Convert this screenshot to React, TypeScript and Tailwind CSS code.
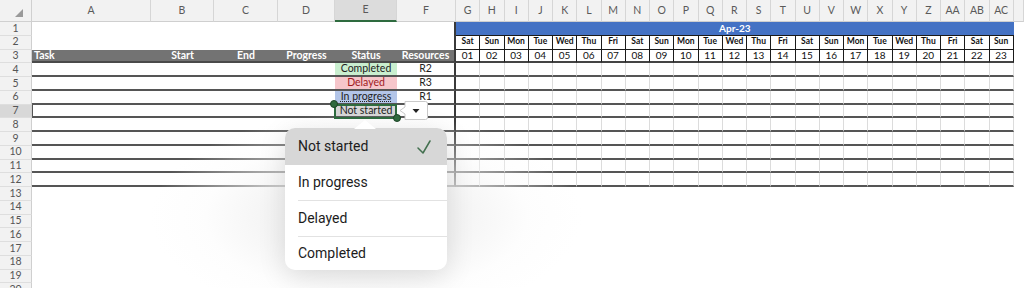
import React from 'react';

const COLS = ['A','B','C','D','E','F','G','H','I','J','K','L','M','N','O','P','Q','R','S','T','U','V','W','X','Y','Z','AA','AB','AC',''];
const DAYS = ['Sat','Sun','Mon','Tue','Wed','Thu','Fri'];
const HEAD3 = ['Task','Start','End','Progress','Status','Resources'];

function cellFor(r: number, c: number): React.ReactNode {
  const key = `${r}-${c}`;
  if (r === 0) {
    if (c === 0) {
      return (
        <div key={key} className="relative bg-[#f2f2f2] border-r border-b border-[#d0d0d0]">
          <svg className="absolute left-[15px] top-[9px]" width="8" height="8" viewBox="0 0 8 8">
            <polygon points="8,0 8,8 0,8" fill="#9a9a9a" />
          </svg>
        </div>
      );
    }
    const sel = c === 5;
    return (
      <div
        key={key}
        className={`flex items-center justify-center border-r border-[#d6d6d6] text-[10.5px] text-[#5a5a5a] ${sel ? 'bg-[#dcdcdc] border-b-2 border-b-[#2e6b3f]' : 'bg-[#f2f2f2] border-b border-b-[#cfcfcf]'}`}
      >
        {COLS[c - 1]}
      </div>
    );
  }
  if (c === 0) {
    return (
      <div
        key={key}
        className={`flex items-center justify-center border-r border-r-[#cfcfcf] border-b border-b-[#dedede] text-[10.5px] text-[#555] ${r === 7 ? 'bg-[#d8d8d8]' : 'bg-[#f2f2f2]'}`}
      >
        {r}
      </div>
    );
  }
  const inTable = r >= 4 && r <= 12;
  if (c >= 1 && c <= 6) {
    const rightF = c === 6 && r <= 12 ? 'border-r-2 border-r-[#3a3a3a]' : '';
    if (r === 3) {
      return (
        <div
          key={key}
          className={`flex items-center bg-[#737373] border-b-2 border-b-[#4a4a4a] font-bold text-white text-[10.5px] ${c === 1 ? 'justify-start pl-[2px]' : 'justify-center'} ${rightF}`}
        >
          {HEAD3[c - 1]}
        </div>
      );
    }
    if (inTable) {
      let content: React.ReactNode = null;
      let extra = '';
      if (c === 5) {
        if (r === 4) { extra = 'bg-[#c9eecf] text-[#1f6b2c]'; content = 'Completed'; }
        if (r === 5) { extra = 'bg-[#f6c6cb] text-[#a01a24]'; content = 'Delayed'; }
        if (r === 6) { extra = 'bg-[#b3c5e8] text-[#4a72c6]'; content = <span className="underline decoration-dotted">In progress</span>; }
        if (r === 7) { extra = 'bg-[#d6d6d6] text-[#7f7f7f]'; content = 'Not started'; }
      }
      if (c === 6) {
        if (r === 4) content = 'R2';
        if (r === 5) content = 'R3';
        if (r === 6) content = 'R1';
      }
      const leftA = c === 1 && r === 7 ? 'border-l border-l-[#555]' : '';
      return (
        <div
          key={key}
          className={`flex items-center justify-center border-b-2 border-b-[#555] text-[10.5px] text-[#222] ${extra} ${rightF} ${leftA}`}
        >
          {content}
        </div>
      );
    }
    return <div key={key} className={rightF} />;
  }
  if (c >= 7 && c <= 29) {
    const d = c - 7;
    if (r === 1) {
      if (c !== 7) return null;
      return (
        <div
          key={key}
          className="col-span-23 flex items-center justify-center bg-[#4472c4] border-b border-b-[#1a1a1a] text-white font-bold text-[10px]"
        >
          Apr-23
        </div>
      );
    }
    if (r === 2) {
      return (
        <div key={key} className="flex items-end justify-center pb-[1px] border-r border-b border-[#1a1a1a] font-bold text-[8.5px] text-[#111]">
          {DAYS[d % 7]}
        </div>
      );
    }
    if (r === 3) {
      return (
        <div key={key} className="flex items-center justify-center border-r border-r-[#1a1a1a] border-b-2 border-b-[#444] text-[10px] text-[#111]">
          {String(d + 1).padStart(2, '0')}
        </div>
      );
    }
    if (inTable) {
      return <div key={key} className="border-r border-r-[#dcdcdc] border-b-2 border-b-[#555]" />;
    }
    return <div key={key} />;
  }
  return <div key={key} />;
}

export default function App() {
  const rows: React.ReactNode[] = [];
  for (let r = 0; r <= 20; r++) {
    for (let c = 0; c <= 30; c++) {
      const cell = cellFor(r, c);
      if (cell) rows.push(cell);
    }
  }
  return (
    <div className="relative w-[1024px] h-[288px] overflow-hidden bg-white font-['Lato',sans-serif]">
      <div className="grid grid-cols-[32px_119px_63px_64px_57px_62px_59px_repeat(23,24.26px)_1fr] grid-rows-[22px_repeat(20,13.75px)] font-['Lato',sans-serif]">
        {rows}
      </div>

      {/* soft haze cast by the popover */}
      <div className="absolute left-[150px] top-[112px] z-10 w-[432px] h-[210px] bg-[radial-gradient(closest-side,rgba(238,238,238,0.95)_0%,rgba(242,242,242,0.8)_45%,rgba(250,250,250,0.35)_75%,rgba(255,255,255,0)_100%)]" />

      <div className="absolute left-[285px] top-[128px] z-20 w-[162px] h-[142px] rounded-[10px] bg-white shadow-[0_6px_28px_rgba(0,0,0,0.12)] font-['Roboto',sans-serif] text-[14px] text-[#1c1c1c] overflow-hidden">
        <div className="h-[37px] bg-[#d7d7d7] pl-[13px] pr-[16px] flex items-center justify-between">
          <span>Not started</span>
          <svg width="14" height="14" viewBox="0 0 14 14">
            <polyline points="1,8 6,13 13,1" fill="none" stroke="#43704f" strokeWidth="1.5" strokeLinecap="round" strokeLinejoin="round" />
          </svg>
        </div>
        <div className="h-[35px] pl-[13px] flex items-center">In progress</div>
        <div className="h-[36px] pl-[13px]">
          <div className="h-full border-t border-[#e2e2e2] flex items-center">Delayed</div>
        </div>
        <div className="h-[34px] pl-[13px]">
          <div className="h-full border-t border-[#e2e2e2] flex items-center">Completed</div>
        </div>
      </div>
      <svg className="absolute left-[354px] top-[120px] z-20" width="22" height="9" viewBox="0 0 22 9">
        <polygon points="0,9 11,0 22,9" fill="#ffffff" />
      </svg>

      <div className="absolute left-[334px] top-[104px] z-30 w-[63px] h-[15px] border-2 border-[#2e6b3f]" />
      <div className="absolute left-[330px] top-[100px] z-30 w-[8px] h-[8px] rounded-full bg-[#2f6a3e] border border-[#1d4527]" />
      <div className="absolute left-[393px] top-[114px] z-30 w-[8px] h-[8px] rounded-full bg-[#2f6a3e] border border-[#1d4527]" />

      <svg className="absolute left-[399px] top-[101px] z-30" width="30" height="19" viewBox="0 0 30 19">
        <path d="M6 0.5 H26.5 Q28.5 0.5 28.5 2.5 V16.5 Q28.5 18.5 26.5 18.5 H6 V13 L1 9.5 L6 6 Z" fill="#ffffff" stroke="#c9c9c9" strokeWidth="1" />
        <polygon points="13.5,8 20.5,8 17,12" fill="#222" />
      </svg>
    </div>
  );
}
